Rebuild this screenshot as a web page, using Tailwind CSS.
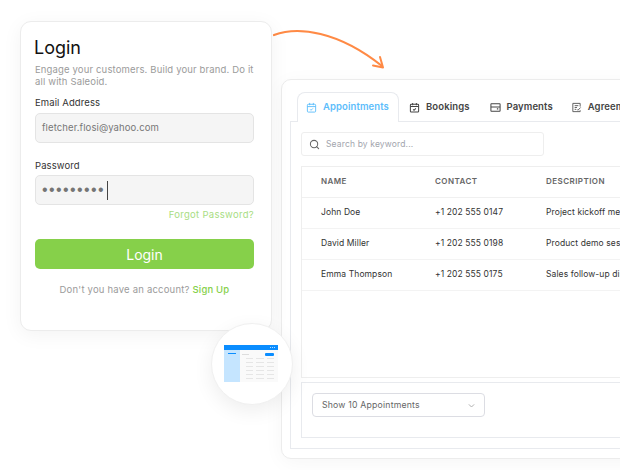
<!DOCTYPE html>
<html lang="en">
<head>
    <meta charset="UTF-8">
    <meta name="viewport" content="width=device-width, initial-scale=1.0">
    <title>Login and Appointments</title>
    <script src="https://cdn.jsdelivr.net/npm/@tailwindcss/browser@4"></script>
</head>
<body class="bg-white font-['Inter',sans-serif]">
    <div class="relative w-[620px] h-[470px] overflow-hidden flex items-start pl-5">
        <!-- Login card -->
        <div class="mt-[21px] w-[252px] h-[310px] shrink-0 bg-white border border-[#ececec] rounded-[11px] shadow-[0_4px_20px_rgba(0,0,0,0.05)] pl-[14px] pr-[17px] relative z-10">
            <h1 class="mt-[13px] -ml-px text-[18px] leading-[26px] text-[#111]">Login</h1>
            <p class="mt-[3px] text-[9.5px] leading-[12px] text-[#9b9b9b] tracking-[0.15px]">Engage your customers. Build your brand. Do it all with Saleoid.</p>
            <label class="block mt-[8px] text-[9.5px] leading-[14px] text-[#333] tracking-[0.1px]">Email Address</label>
            <div class="mt-[3px] h-[30px] bg-[#f5f5f5] border border-[#e4e4e4] rounded-[5px] flex items-center pl-[6px] text-[9.5px] text-[#777] tracking-[0.1px]">fletcher.flosi@yahoo.com</div>
            <label class="block mt-[16px] text-[9.5px] leading-[14px] text-[#333] tracking-[0.1px]">Password</label>
            <div class="mt-[2px] h-[30px] bg-[#f5f5f5] border border-[#e4e4e4] rounded-[5px] flex items-center pl-[6px] gap-[2px]">
                <span class="font-['Liberation_Sans',sans-serif] text-[16px] leading-none text-[#757575] tracking-[1.4px]">•••••••••</span>
                <span class="w-px h-[19px] bg-[#444]"></span>
            </div>
            <div class="mt-[3px] text-right text-[9.5px] leading-[14px] text-[#a8dd82] tracking-[0.3px]">Forgot Password?</div>
            <button class="block mt-[17px] w-full h-[30px] bg-[#86d04a] rounded-[5px] text-white text-[14px]">Login</button>
            <p class="mt-[14px] text-center text-[9.5px] leading-[14px] text-[#9b9b9b] tracking-[0.2px]">Don't you have an account? <span class="text-[#86d04a] font-medium">Sign Up</span></p>
        </div>

        <!-- Appointments card -->
        <div class="ml-[9px] mt-[79px] w-[420px] h-[380px] shrink-0 bg-white border border-[#ececec] rounded-[10px] shadow-[0_4px_20px_rgba(0,0,0,0.04)] pl-[8px] pt-[12px]">
            <!-- Tabs -->
            <div class="flex pl-[7px] h-[30px] items-stretch text-[9.5px] font-semibold text-[#444] tracking-[0.1px] whitespace-nowrap">
                <div class="relative z-10 h-[30px] flex items-center gap-[6px] pl-[8px] w-[102px] bg-white border border-b-0 border-[#e8eaee] rounded-t-[8px] text-[#5cbdfb]">
                    <svg class="shrink-0" width="11" height="11" viewBox="0 0 24 24" fill="none" stroke="#5cbdfb" stroke-width="2"><rect x="3" y="5" width="18" height="17" rx="2"/><path d="M3 10h18M8 2v5M16 2v5M9 16l2 2 4-4"/></svg>
                    Appointments
                </div>
                <div class="flex items-center gap-[6px] px-[10px]">
                    <svg class="shrink-0" width="11" height="11" viewBox="0 0 24 24" fill="none" stroke="#444" stroke-width="2.2"><rect x="3" y="5" width="18" height="17" rx="2"/><path d="M3 10h18M8 2v5M16 2v5M9 16l2 2 4-4"/></svg>
                    Bookings
                </div>
                <div class="flex items-center gap-[6px] pl-[10px] pr-[9px]">
                    <svg class="shrink-0" width="11" height="11" viewBox="0 0 24 24" fill="none" stroke="#444" stroke-width="2.2"><rect x="2" y="4" width="20" height="16" rx="1"/><path d="M2 11h20M15 15h3"/></svg>
                    Payments
                </div>
                <div class="flex items-center gap-[6px] pl-[9px] pr-[10px]">
                    <svg class="shrink-0" width="11" height="11" viewBox="0 0 24 24" fill="none" stroke="#555" stroke-width="2"><path d="M20 10V3H4v18h16v-3"/><path d="M8 8h8M8 12h5M8 16h3M13 16l2 2 6-6"/></svg>
                    Agreements
                </div>
            </div>
            <!-- Tab panel -->
            <div class="-mt-px h-[328px] border border-[#e8eaee] pl-[10px] pt-[10px] pb-[10px]">
                <div class="w-[243px] h-[24px] border border-[#eeeeee] rounded-[3px] flex items-center gap-[6px] pl-[7px] text-[8.5px] text-[#a2a5ad] tracking-[0.15px]">
                    <svg class="shrink-0" width="11" height="11" viewBox="0 0 24 24" fill="none" stroke="#666" stroke-width="2.2" stroke-linecap="round"><circle cx="11" cy="11" r="8"/><path d="m21 21-4.500-4.500"/></svg>
                    Search by keyword...
                </div>
                <div class="mt-[10px] h-[212px] border border-[#eeeeee] border-r-0 text-[8.5px] text-[#333] tracking-[0.1px] whitespace-nowrap">
                    <div class="h-[31px] grid grid-cols-[114px_111px_1fr] items-center pl-[19px] pb-[2px] border-b border-[#f0f0f0] text-[8px] font-semibold text-[#666] tracking-[0.45px]">
                        <span>NAME</span><span>CONTACT</span><span>DESCRIPTION</span>
                    </div>
                    <div class="h-[31px] grid grid-cols-[114px_111px_1fr] items-center pl-[19px] pb-[2px] border-b border-[#f3f3f3]">
                        <span>John Doe</span><span>+1 202 555 0147</span><span>Project kickoff meeting</span>
                    </div>
                    <div class="h-[31px] grid grid-cols-[114px_111px_1fr] items-center pl-[19px] pb-[2px] border-b border-[#f3f3f3]">
                        <span>David Miller</span><span>+1 202 555 0198</span><span>Product demo session</span>
                    </div>
                    <div class="h-[31px] grid grid-cols-[114px_111px_1fr] items-center pl-[19px] pb-[2px] border-b border-[#f3f3f3]">
                        <span>Emma Thompson</span><span>+1 202 555 0175</span><span>Sales follow-up discussion</span>
                    </div>
                </div>
                <div class="mt-[4px] h-[56px] border border-[#e8eaee] border-r-0 pl-[10px] pt-[10px]">
                    <div class="w-[173px] h-[24px] border border-[#dcdde3] rounded-[4px] flex items-center justify-between pl-[9px] pr-[8px] pt-px text-[8.7px] text-[#666] tracking-[0.2px]">
                        Show 10 Appointments
                        <svg class="shrink-0" width="9" height="9" viewBox="0 0 24 24" fill="none" stroke="#aaa" stroke-width="2.5"><path d="m5 9 7 7 7-7"/></svg>
                    </div>
                </div>
            </div>
        </div>

        <!-- Arrow over the gap -->
        <svg class="absolute left-[270px] top-[25px]" width="120" height="50" viewBox="0 0 120 50" fill="none" stroke="#ff8a45" stroke-linecap="round" stroke-linejoin="round">
            <path d="M4 10C28 1 68 6 112 41" stroke-width="2.200"/>
            <path d="M103 40.500 113 42.500 110 32" stroke-width="2"/>
        </svg>

        <!-- Thumbnail badge -->
        <div class="absolute left-[211px] top-[323px] z-20 w-[82px] h-[82px] rounded-full bg-white border border-[#f0f0f0] shadow-[0_6px_20px_rgba(0,0,0,0.07)] flex items-center justify-center pr-[2px] pb-px">
            <div class="w-[54px] h-[37px] bg-[#fafafa] flex flex-col">
                <div class="h-[5px] bg-[#0a8dff] flex items-center justify-end gap-px pr-[3px]">
                    <i class="w-px h-px bg-white/70"></i><i class="w-px h-px bg-white/70"></i><i class="w-px h-px bg-white/70"></i>
                </div>
                <div class="flex flex-1">
                    <div class="w-[16px] bg-[#c5e5ff] pl-[4px] pt-[3px]"><div class="w-[8px] h-px bg-[#0a8dff]"></div></div>
                    <div class="flex-1 pl-[2px] pr-[4px] pt-[3px]">
                        <div class="flex justify-between items-center">
                            <div class="w-[7px] h-px bg-[#ddd]"></div>
                            <div class="w-[9px] h-[3px] bg-[#0a8dff] rounded-[1px]"></div>
                        </div>
                        <div class="mt-[2px] ml-[4px] grid grid-cols-3 gap-x-[3px] gap-y-[3px]">
                            <i class="h-px bg-[#e6e6e6]"></i><i class="h-px bg-[#e6e6e6]"></i><i class="h-px bg-[#e6e6e6]"></i>
                            <i class="h-px bg-[#e6e6e6]"></i><i class="h-px bg-[#e6e6e6]"></i><i class="h-px bg-[#e6e6e6]"></i>
                            <i class="h-px bg-[#e6e6e6]"></i><i class="h-px bg-[#e6e6e6]"></i><i class="h-px bg-[#e6e6e6]"></i>
                            <i class="h-px bg-[#e6e6e6]"></i><i class="h-px bg-[#e6e6e6]"></i><i class="h-px bg-[#e6e6e6]"></i>
                            <i class="h-px bg-[#e6e6e6]"></i><i class="h-px bg-[#e6e6e6]"></i><i class="h-px bg-[#e6e6e6]"></i>
                            <i class="h-px bg-[#e6e6e6]"></i><i class="h-px bg-[#e6e6e6]"></i><i class="h-px bg-[#e6e6e6]"></i>
                        </div>
                    </div>
                </div>
            </div>
        </div>
    </div>
</body>
</html>
